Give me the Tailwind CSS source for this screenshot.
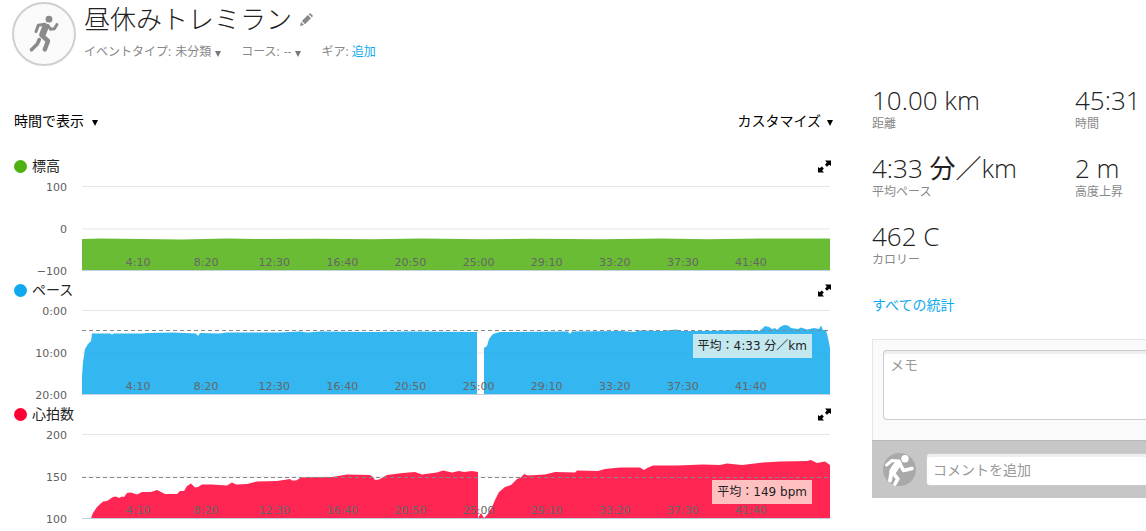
<!DOCTYPE html>
<html lang="ja">
<head>
    <meta charset="UTF-8">
    <meta name="viewport" content="width=device-width, initial-scale=1.0">
    <title>昼休みトレミラン</title>
    <script src="https://cdn.jsdelivr.net/npm/@tailwindcss/browser@4"></script>
</head>
<body class="bg-white text-[#222] font-['Open_Sans','Noto_Sans_CJK_JP',sans-serif]">
    <div class="pl-3 pt-0.5">

        <!-- Activity header -->
        <header class="flex gap-2">
            <div class="w-16 h-16 shrink-0 rounded-full border-2 border-[#cfcfcf] bg-[#fafafa]">
                <svg class="w-[60px] h-[60px]" viewBox="2 2 60 60" fill="none" stroke="#8a8a8a" stroke-linecap="round" stroke-linejoin="round">
                    <circle cx="37" cy="17.2" r="3.4" fill="#8a8a8a" stroke="none"/>
                    <path stroke-width="3" d="M24 29.5 L26.3 23.3 L33 22.3"/>
                    <path stroke-width="3" d="M36 23.5 L38.5 27.3 L42.3 26.8 L45 22.5"/>
                    <path stroke-width="6.5" d="M33.5 24.8 L30.5 32.5"/>
                    <path stroke-width="4.4" d="M30.5 34 L36 39 L32.8 47.5"/>
                    <path stroke-width="3.6" d="M27.3 37.5 L25.3 42 L19.5 47.8"/>
                </svg>
            </div>
            <div class="flex flex-col">
                <div class="flex items-center gap-2 h-[34px]">
                    <h1 class="text-[26px] leading-[34px] font-light">昼休みトレミラン</h1>
                    <button type="button" aria-label="名前を編集">
                        <svg class="w-[13px] h-[13px] block" viewBox="0 0 12 12" fill="#888">
                            <path d="M0 12 L.9 8.3 L3.7 11.1 Z"/>
                            <path d="M1.7 7.4 L7.2 1.9 L10.1 4.8 L4.6 10.3 Z"/>
                            <path d="M8 1.1 L8.8 .3 Q9.2 0 9.6 .3 L11.7 2.4 Q12 2.8 11.7 3.2 L10.9 4 Z"/>
                        </svg>
                    </button>
                </div>
                <div class="flex items-center gap-5 h-[30px] pt-0.5 text-xs text-[#888]">
                    <div class="flex items-center gap-1">
                        <label for="eventType">イベントタイプ:</label>
                        <select id="eventType" class="appearance-none field-sizing-content bg-transparent">
                            <option>未分類</option>
                        </select>
                        <svg class="w-1.5 h-1.5 mt-1" viewBox="0 0 6 6" fill="#777"><path d="M0 0h6L3 6z"/></svg>
                    </div>
                    <div class="flex items-center gap-1">
                        <label for="course">コース:</label>
                        <select id="course" class="appearance-none field-sizing-content bg-transparent">
                            <option>--</option>
                        </select>
                        <svg class="w-1.5 h-1.5 mt-1" viewBox="0 0 6 6" fill="#777"><path d="M0 0h6L3 6z"/></svg>
                    </div>
                    <div>ギア: <a href="#" class="text-[#11a9ed]">追加</a></div>
                </div>
            </div>
        </header>

        <div class="flex gap-[38px]">
            <!-- Charts -->
            <main class="flex-1 min-w-0">
                <div class="flex justify-between items-center mt-[43px] pl-0.5 h-6 text-sm text-black">
                    <div class="flex items-center gap-2">
                        <select id="xAxis" aria-label="横軸" class="appearance-none field-sizing-content bg-transparent">
                            <option>時間で表示</option>
                        </select>
                        <svg class="w-1.5 h-1.5 mt-1" viewBox="0 0 6 6"><path d="M0 0h6L3 6z"/></svg>
                    </div>
                    <button type="button" class="flex items-center gap-1.5 pr-px">
                        カスタマイズ
                        <svg class="w-1.5 h-1.5 mt-1" viewBox="0 0 6 6"><path d="M0 0h6L3 6z"/></svg>
                    </button>
                </div>

                <!-- Elevation -->
                <section class="mt-[13px] pl-0.5 pr-1">
                    <div class="flex items-center h-10">
                        <span class="w-[13px] h-[13px] rounded-full bg-[#4fb011]"></span>
                        <h2 class="ml-[5px] text-sm">標高</h2>
                        <button type="button" class="ml-auto -mr-px" aria-label="標高を拡大">
                            <svg class="w-[13px] h-[13px] block" viewBox="0 0 13 13"><path d="M7 .5H13V6L11.2 4.8L9 6.8L7 4.8L8.8 2.6Z"/><path d="M0 7L1.8 8.2L3.8 6.4L5.8 8.4L4.2 10.4L6 12.5H0Z"/></svg>
                        </button>
                    </div>
                    <div class="flex h-[84px]">
                        <div class="w-[53px] h-24 -mt-1 mr-[15px] flex flex-col justify-between text-right text-[11px] leading-3 text-[#606060] font-['DejaVu_Sans',sans-serif]">
                            <span>100</span><span>0</span><span>−100</span>
                        </div>
                        <div class="relative flex-1">
                            <svg class="absolute inset-0 w-full h-full overflow-visible" viewBox="0 0 748 84" preserveAspectRatio="none">
                                <path d="M0 .5H748M0 43H748" stroke="#e6e6e6"/>
                                <path d="M0 84V53L18 52.5L60 53L100 53.5L145 52.6L180 53L235 52.8L290 53.3L340 52.6L400 53.2L450 52.7L520 53.2L580 52.6L625 53.2L680 52.5L748 52.5V84Z" fill="#4fb011" fill-opacity=".85"/>
                                <path d="M0 84.5H748" stroke="#c0d0e0"/>
                            </svg>
                            <div class="absolute inset-x-0 bottom-px grid grid-cols-10 pl-[22px] pr-[45px] text-center text-[11px] leading-3 text-[#666] font-['DejaVu_Sans',sans-serif]">
                                <span>4:10</span><span>8:20</span><span>12:30</span><span>16:40</span><span>20:50</span><span>25:00</span><span>29:10</span><span>33:20</span><span>37:30</span><span>41:40</span>
                            </div>
                        </div>
                    </div>
                </section>

                <!-- Pace -->
                <section class="pl-0.5 pr-1">
                    <div class="flex items-center h-10">
                        <span class="w-[13px] h-[13px] rounded-full bg-[#11a9ed]"></span>
                        <h2 class="ml-[5px] text-sm">ペース</h2>
                        <button type="button" class="ml-auto -mr-px" aria-label="ペースを拡大">
                            <svg class="w-[13px] h-[13px] block" viewBox="0 0 13 13"><path d="M7 .5H13V6L11.2 4.8L9 6.8L7 4.8L8.8 2.6Z"/><path d="M0 7L1.8 8.2L3.8 6.4L5.8 8.4L4.2 10.4L6 12.5H0Z"/></svg>
                        </button>
                    </div>
                    <div class="flex h-[84px]">
                        <div class="w-[53px] h-24 -mt-1 mr-[15px] flex flex-col justify-between text-right text-[11px] leading-3 text-[#606060] font-['DejaVu_Sans',sans-serif]">
                            <span>0:00</span><span>10:00</span><span>20:00</span>
                        </div>
                        <div class="relative flex-1">
                            <svg class="absolute inset-0 w-full h-full overflow-visible" viewBox="0 0 748 84" preserveAspectRatio="none">
                                <path d="M0 .5H748M0 43H748" stroke="#e6e6e6"/>
                                <g fill="#11a9ed" fill-opacity=".85">
                                    <path d="M0 84V66L1 52L3 39L6 34L9 31L10 23.5L28 23.5L30 24.5L32 23.5L61 23.5L65 23L91 22.5L114 23.5L116 26L118 23L137 23.5L145 22.5L198 22.5L218 21.5L225 22.5L238 21.5L290 22L330 21.5L395 22V84Z"/>
                                    <path d="M402 84V38L405 36L407 29L411 24L418 22L486 21.5L488 24L490 21.5L538 21L553 22L556 20.5L580 21L594 19.5L600 21L621 21L665 20L677 21L680 19L683 16L687 17L690 19L693 18L695 20L698 17L702 15L706 15.5L709 18L716 19L719 17.5L725 19.5L732 18L737 19L739 15.5L741 20L744 20L746 28L748 38V84Z"/>
                                </g>
                                <path d="M0 20.5H748" stroke="#888" stroke-dasharray="4 3"/>
                                <path d="M0 84.5H748" stroke="#c0d0e0"/>
                            </svg>
                            <div class="absolute inset-x-0 bottom-px grid grid-cols-10 pl-[22px] pr-[45px] text-center text-[11px] leading-3 text-[#666] font-['DejaVu_Sans',sans-serif]">
                                <span>4:10</span><span>8:20</span><span>12:30</span><span>16:40</span><span>20:50</span><span>25:00</span><span>29:10</span><span>33:20</span><span>37:30</span><span>41:40</span>
                            </div>
                            <div class="absolute right-[18px] top-6 px-[5px] bg-[#c3e8ef] text-xs leading-6 font-['DejaVu_Sans','Noto_Sans_CJK_JP',sans-serif]">平均：4:33 分／km</div>
                        </div>
                    </div>
                </section>

                <!-- Heart rate -->
                <section class="pl-0.5 pr-1">
                    <div class="flex items-center h-10">
                        <span class="w-[13px] h-[13px] rounded-full bg-[#ff0035]"></span>
                        <h2 class="ml-[5px] text-sm">心拍数</h2>
                        <button type="button" class="ml-auto -mr-px" aria-label="心拍数を拡大">
                            <svg class="w-[13px] h-[13px] block" viewBox="0 0 13 13"><path d="M7 .5H13V6L11.2 4.8L9 6.8L7 4.8L8.8 2.6Z"/><path d="M0 7L1.8 8.2L3.8 6.4L5.8 8.4L4.2 10.4L6 12.5H0Z"/></svg>
                        </button>
                    </div>
                    <div class="flex h-[84px]">
                        <div class="w-[53px] h-24 -mt-1 mr-[15px] flex flex-col justify-between text-right text-[11px] leading-3 text-[#606060] font-['DejaVu_Sans',sans-serif]">
                            <span>200</span><span>150</span><span>100</span>
                        </div>
                        <div class="relative flex-1">
                            <svg class="absolute inset-0 w-full h-full overflow-visible" viewBox="0 0 748 84" preserveAspectRatio="none">
                                <path d="M0 .5H748M0 43H748" stroke="#e6e6e6"/>
                                <g fill="#ff0035" fill-opacity=".85">
                                    <path d="M9 84L11 79L15 73L21 67.5L25 67L31 63L34 62.5L37 64L40 62.5L42 63L45 59L49 58.5L55 60.5L60 58L69 58L75 56L79 58L83 60L95 60L98 57L102 57L105 52L109 49.5L113 53.5L116 53L120 50.5L130 50.5L145 51.5L150 48.5L154 50.5L165 50L175 47.5L195 47L208 45L210 46.5L214 46.5L219 43.5L250 43L265 40.5L288 41L291 43L293 46L297 45.5L305 41L321 39L333 38L340 40.5L355 38.5L361 36.5L370 38.5L377 37L382 38L390 37L396 38V84Z"/>
                                    <path d="M396 84L399 79L402 84L405 81L410 73L413 66L417 58L423 53L429 51L435 45L439 43.5L442 40L446 41.5L463 40.5L473 38L493 38.5L495 36.5L516 37L523 35L538 33.5L558 33.5L562 36L565 34L571 31.5L595 31.5L621 30.5L638 31L645 29.5L660 31L681 28.5L698 27.5L726 27L728 26L730 26.5L735 29L743 27.5L748 31V84Z"/>
                                </g>
                                <path d="M0 43.5H748" stroke="#888" stroke-dasharray="4 3"/>
                                <path d="M0 84.5H748" stroke="#c0d0e0"/>
                            </svg>
                            <div class="absolute inset-x-0 bottom-px grid grid-cols-10 pl-[22px] pr-[45px] text-center text-[11px] leading-3 text-[#666] font-['DejaVu_Sans',sans-serif]">
                                <span>4:10</span><span>8:20</span><span>12:30</span><span>16:40</span><span>20:50</span><span>25:00</span><span>29:10</span><span>33:20</span><span>37:30</span><span>41:40</span>
                            </div>
                            <div class="absolute right-[18px] top-[46px] px-[5px] bg-[#ffc0c2] text-xs leading-6 font-['DejaVu_Sans','Noto_Sans_CJK_JP',sans-serif]">平均：149 bpm</div>
                        </div>
                    </div>
                </section>

                <!-- Cadence -->
                <section class="pl-0.5 pr-1">
                    <div class="flex items-center h-10">
                        <span class="w-[13px] h-[13px] rounded-full bg-[#ed7e00]"></span>
                        <h2 class="ml-[5px] text-sm">ケイデンス</h2>
                    </div>
                </section>
            </main>

            <!-- Stats and notes -->
            <aside class="w-[274px] shrink-0 pt-[18px]">
                <dl class="grid grid-cols-[203px_1fr] gap-y-5">
                    <div class="flex flex-col-reverse">
                        <dt class="text-xs leading-4 text-[#888]">距離</dt>
                        <dd class="text-[26px] leading-8 font-light">10.00 km</dd>
                    </div>
                    <div class="flex flex-col-reverse">
                        <dt class="text-xs leading-4 text-[#888]">時間</dt>
                        <dd class="text-[26px] leading-8 font-light">45:31</dd>
                    </div>
                    <div class="flex flex-col-reverse">
                        <dt class="text-xs leading-4 text-[#888]">平均ペース</dt>
                        <dd class="text-[26px] leading-8 font-light">4:33 <span class="font-normal">分／</span>km</dd>
                    </div>
                    <div class="flex flex-col-reverse">
                        <dt class="text-xs leading-4 text-[#888]">高度上昇</dt>
                        <dd class="text-[26px] leading-8 font-light">2 m</dd>
                    </div>
                    <div class="flex flex-col-reverse">
                        <dt class="text-xs leading-4 text-[#888]">カロリー</dt>
                        <dd class="text-[26px] leading-8 font-light">462 C</dd>
                    </div>
                </dl>
                <a href="#" class="block mt-[27px] text-sm leading-5 text-[#11a9ed]">すべての統計</a>

                <div class="mt-6 border-l border-t border-[#e5e5e5] bg-[#fafafa] pl-2.5 pt-2.5 h-[101px]">
                    <textarea aria-label="メモ" placeholder="メモ" class="block w-full h-[70px] resize-none rounded-l border border-r-0 border-[#ccc] bg-white px-1.5 py-1 text-sm leading-5 placeholder:text-[#999] shadow-[inset_0_3px_0_#eee]"></textarea>
                </div>
                <div class="flex items-center gap-2.5 h-[58px] pl-[11px] border-t border-[#b8b8b8] bg-[#c6c6c6]">
                    <svg class="w-[33px] h-[33px] shrink-0" viewBox="0 0 33 33" fill="none" stroke="#fff" stroke-linecap="round" stroke-linejoin="round">
                        <circle cx="16.5" cy="16.5" r="16.5" fill="#a9a9a9" stroke="none"/>
                        <circle cx="22" cy="5.8" r="3.7" fill="#fff" stroke="none"/>
                        <path stroke-width="3" d="M3.5 12 L9 7.5 L16 8"/>
                        <path stroke-width="7" d="M15 10.5 L10 18"/>
                        <path stroke-width="3.6" d="M17 11 L20.5 17.5 L29 15.5"/>
                        <path stroke-width="4" d="M8.5 19 L7 27.5"/>
                        <path stroke-width="3.6" d="M10.5 20.5 L14.8 25.8 L12 31"/>
                    </svg>
                    <input type="text" aria-label="コメントを追加" placeholder="コメントを追加" class="flex-1 min-w-0 h-[33px] rounded-l border border-r-0 border-[#ccc] bg-white px-1.5 text-sm placeholder:text-[#999] shadow-[inset_0_3px_0_#eee]">
                </div>
            </aside>
        </div>
    </div>
</body>
</html>
